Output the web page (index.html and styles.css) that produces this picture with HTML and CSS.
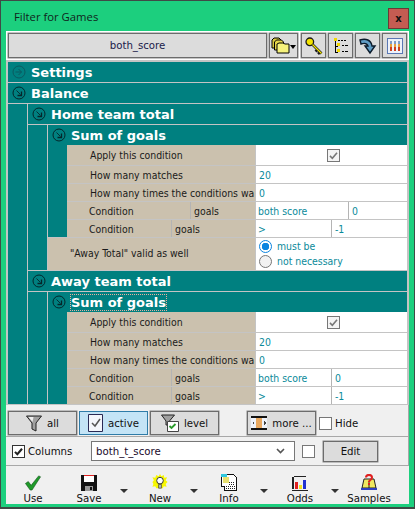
FILE: index.html
```html
<!DOCTYPE html>
<html lang="en">
<head>
  <meta charset="UTF-8" />
  <title>Filter for Games</title>
  <link rel="stylesheet" href="styles.css">
</head>
<body>
  <svg class="defs" width="0" height="0">
    <symbol id="arrow-right" viewBox="0 0 14 14"><circle cx="7" cy="7" r="6" fill="none" stroke="#0b5a60"/><path d="M3.500 7h6M6.500 4l3 3-3 3" fill="none" stroke="#0b5a60"/></symbol>
    <symbol id="arrow-down" viewBox="0 0 14 14"><circle cx="7" cy="7" r="6" fill="none" stroke="#04262a"/><path d="M4.500 4.500l4 4" fill="none" stroke="#04262a" stroke-width=".9"/><path d="M9.500 5.500v4h-4" fill="none" stroke="#04262a" stroke-width="1.300"/></symbol>
    <symbol id="tick" viewBox="0 0 14 14"><path d="M2.500 7.500l3 3 6-7" fill="none" stroke="#777" stroke-width="2"/></symbol>
  </svg>

  <div class="window">
    <div class="titlebar">
      <span class="title">Filter for Games</span>
      <button class="close">x</button>
    </div>

    <div class="panel">
      <div class="topbar">
        <button class="btn name-btn">both_score</button>
        <button class="btn icon-btn wide">
          <svg width="25" height="17" viewBox="0 0 25 17"><path d="M1 3l2-2h5l2 2v8H1z" fill="#d8c840" stroke="#000"/><path d="M3.500 5l2-2h5l2 2v8h-9z" fill="#e8d848" stroke="#000"/><path d="M6 7l2-1h4l2 1h4v9H6z" fill="#f6f27c" stroke="#000"/><path d="M19 8h6l-3 4z" fill="#000"/></svg>
        </button>
        <button class="btn icon-btn">
          <svg width="18" height="18" viewBox="0 0 18 18"><circle cx="4.800" cy="4.800" r="3.800" fill="#f4e400" stroke="#1a1a1a" stroke-width="1.300"/><path d="M7.500 7.500l9 9M12.500 12.500l-2 2M15 15l-2 2" fill="none" stroke="#1a1a1a" stroke-width="2.600"/><path d="M7.500 7.500l9 9" stroke="#f4e400" stroke-width="1.300"/></svg>
        </button>
        <button class="btn icon-btn">
          <svg width="16" height="18" viewBox="0 0 16 18" shape-rendering="crispEdges"><path d="M2.500 3v13M2.500 9H5M2.500 15H5" stroke="#000" fill="none"/><path d="M1 1h3v3H1zM4 6h3v3H4zM4 12h3v3H4z" fill="#f2d800"/><path d="M5 3h2M8 3h2M11 3h2M9 8h2M12 8h3M9 14h2M12 14h3" stroke="#000"/></svg>
        </button>
        <button class="btn icon-btn">
          <svg width="18" height="18" viewBox="0 0 18 18"><path d="M1 3c6-2 11 0 12 6h3l-5 7-5-7h3C8 6 5 6 2 7z" fill="#5f9cc4" stroke="#0b1b2b" stroke-width="1.400"/></svg>
        </button>
        <button class="btn icon-btn">
          <svg width="16" height="16" viewBox="0 0 16 16" shape-rendering="crispEdges"><path d="M.5.500h15v15H.500z" fill="#eef2fa" stroke="#5a78b4"/><path d="M3 3h2v10H3zM7 3h2v10H7zM11 3h2v10h-2z" fill="#e8a040"/><path d="M3 3h2v3H3zM7 3h2v3H7zM11 3h2v3h-2z" fill="#7f9cc8"/><path d="M3 9h2v4H3zM7 9h2v4H7zM11 9h2v4h-2z" fill="#d04020"/></svg>
        </button>
      </div>

      <div class="tree">
        <div class="head"><svg class="arrow"><use href="#arrow-right"/></svg>Settings</div>

        <div class="head"><svg class="arrow"><use href="#arrow-down"/></svg>Balance</div>
        <div class="nest">
          <div class="strip"></div>
          <div class="nest-body">
            <div class="head"><svg class="arrow"><use href="#arrow-down"/></svg>Home team total</div>
            <div class="nest">
              <div class="strip"></div>
              <div class="nest-body">
                <div class="head"><svg class="arrow"><use href="#arrow-down"/></svg>Sum of goals</div>
                <div class="nest flush">
                  <div class="strip last"></div>
                  <div class="rows">
                    <div class="row first">
                      <div class="label">Apply this condition</div>
                      <div class="value center"><span class="check"><svg width="11" height="11"><use href="#tick"/></svg></span></div>
                    </div>
                    <div class="row">
                      <div class="label">How many matches</div>
                      <div class="value">20</div>
                    </div>
                    <div class="row">
                      <div class="label">How many times the conditions wa</div>
                      <div class="value">0</div>
                    </div>
                    <div class="row">
                      <div class="label split s1"><span>Condition</span><span>goals</span></div>
                      <div class="value pair p1"><span>both score</span><span>0</span></div>
                    </div>
                    <div class="row">
                      <div class="label split s2"><span>Condition</span><span>goals</span></div>
                      <div class="value pair p2"><span>&gt;</span><span>-1</span></div>
                    </div>
                  </div>
                </div>
                <div class="row away">
                  <div class="label">"Away Total" valid as well</div>
                  <div class="value radios">
                    <div class="radio-line"><span class="radio on"></span>must be</div>
                    <div class="radio-line"><span class="radio"></span>not necessary</div>
                  </div>
                </div>
              </div>
            </div>

            <div class="head"><svg class="arrow"><use href="#arrow-down"/></svg>Away team total</div>
            <div class="nest">
              <div class="strip"></div>
              <div class="nest-body">
                <div class="head"><svg class="arrow"><use href="#arrow-down"/></svg><span class="focus">Sum of goals</span></div>
                <div class="nest flush">
                  <div class="strip last"></div>
                  <div class="rows">
                    <div class="row first">
                      <div class="label">Apply this condition</div>
                      <div class="value center"><span class="check"><svg width="11" height="11"><use href="#tick"/></svg></span></div>
                    </div>
                    <div class="row">
                      <div class="label">How many matches</div>
                      <div class="value">20</div>
                    </div>
                    <div class="row">
                      <div class="label">How many times the conditions wa</div>
                      <div class="value">0</div>
                    </div>
                    <div class="row">
                      <div class="label split s2"><span>Condition</span><span>goals</span></div>
                      <div class="value pair p2"><span>both score</span><span>0</span></div>
                    </div>
                    <div class="row">
                      <div class="label split s2"><span>Condition</span><span>goals</span></div>
                      <div class="value pair p2"><span>&gt;</span><span>-1</span></div>
                    </div>
                  </div>
                </div>
              </div>
            </div>
          </div>
        </div>
      </div>

      <div class="filters">
        <button class="btn filter">
          <svg width="16" height="17" viewBox="0 0 16 17"><path d="M.5 1h15l-5.500 7v8l-4-2V8z" fill="#a0a0a0" stroke="#222"/><path d="M2.500 2h5l-1 5z" fill="#eee"/></svg>all
        </button>
        <button class="btn filter active">
          <svg width="15" height="18" viewBox="0 0 15 18"><path d="M.5.500h14v17H.500z" fill="#f4f6fb" stroke="#2a2a55"/><path d="M4 9l3 3 5-7" fill="none" stroke="#555" stroke-width="1.500"/></svg>active
        </button>
        <button class="btn filter">
          <svg width="18" height="18" viewBox="0 0 18 18"><path d="M.5 1h13l-5 6v4H5V7z" fill="#a0a0a0" stroke="#222"/><path d="M6.500 7.500h11v10h-11z" fill="#fff" stroke="#444"/><path d="M8.500 12l2 2 4-4" fill="none" stroke="#2a9a2a" stroke-width="1.800"/></svg>level
        </button>
        <button class="btn filter more">
          <svg width="16" height="14" viewBox="0 0 16 14" shape-rendering="crispEdges"><path d="M0 0h16v2H0zM0 12h16v2H0z" fill="#111"/><path d="M0 2h16v10H0z" fill="#eef2fa"/><path d="M5 2h6v10H5z" fill="#e8a860"/><path d="M3 5v4L1 7zM13 5v4l2-2z" fill="#444"/></svg>more ...
        </button>
        <label class="check-line hide"><span class="box"></span>Hide</label>
      </div>

      <div class="columns">
        <label class="check-line cols-check"><span class="box dark"><svg width="11" height="11" viewBox="0 0 14 14"><path d="M2.500 7.500l3 3 6-7" fill="none" stroke="#222" stroke-width="2.600"/></svg></span>Columns</label>
        <div class="select">both_t_score<svg width="9" height="6" viewBox="0 0 9 6"><path d="M1 1l3.500 3.500L8 1" fill="none" stroke="#555" stroke-width="1.600"/></svg></div>
        <span class="box"></span>
        <button class="btn edit">Edit</button>
      </div>

      <div class="actions">
        <div class="action a-use">
          <svg width="18" height="17" viewBox="0 0 18 18"><path d="M1 10l3-2 3 4 8-10 2 1-9 14h-2z" fill="#1f9a2a" stroke="#0a5014" stroke-width=".6"/></svg>
          <span>Use</span>
        </div>
        <div class="action a-save">
          <svg width="16" height="17" viewBox="0 0 16 16" shape-rendering="crispEdges"><path d="M1 0h14l1 1v15H0V1z" fill="#111"/><path d="M3 0h10v1H3z" fill="#e02020"/><path d="M3 1h10v6H3z" fill="#fff"/><path d="M4 11h8v5H4z" fill="#999"/><path d="M9 12h2v3H9z" fill="#111"/></svg>
          <span>Save</span>
        </div>
        <span class="caret"></span>
        <div class="action a-new">
          <svg width="16" height="17" viewBox="0 0 16 18"><path d="M8 0l1.500 2.500L12 1l.5 3 3-.500-1.500 3 2 2-2 2 1 3-3-.500-1 2H4l-1-2-3 .500 1-3-1-2 1.500-2L0 3.500l3 .500L4 1l2.500 1.500z" fill="#f8f800"/><circle cx="8" cy="7" r="3.500" fill="#fff" stroke="#333"/><path d="M6.500 11h3v4h-3z" fill="#bbb" stroke="#333" stroke-width=".7"/></svg>
          <span>New</span>
        </div>
        <span class="caret"></span>
        <div class="action a-info">
          <svg width="16" height="17" viewBox="0 0 16 17" shape-rendering="crispEdges"><path d="M.5 2.500h2v-2h10l3 3v13H3.500v-4h-3z" fill="#fff" stroke="#111"/><path d="M0 0h6v3H0z" fill="#30c8e0"/><path d="M2 3h6v6H2z" fill="#e8e070"/><path d="M8 8h6M8 10h6M5 12h9M5 14h9" stroke="#222" stroke-dasharray="1 1"/></svg>
          <span>Info</span>
        </div>
        <span class="caret"></span>
        <div class="action a-odds">
          <svg width="16" height="17" viewBox="0 0 16 16" shape-rendering="crispEdges"><path d="M0 2h2v12H0zM0 15h16v1H0zM2 1h12v1H2z" fill="#222"/><path d="M3 7h3v7H3z" fill="#e02020"/><path d="M7 10h3v4H7z" fill="#f0e020"/><path d="M11 5h3v9h-3z" fill="#2030d0"/></svg>
          <span>Odds</span>
        </div>
        <span class="caret"></span>
        <div class="action a-samples">
          <svg width="16" height="17" viewBox="0 0 16 17"><path d="M3 5h10l2 9H1z" fill="#f0e860" stroke="#222"/><path d="M0 14h16v2H0z" fill="#3040c0"/><path d="M8 7v7" stroke="#222"/><path d="M5 3.500C5 0 11 0 11 3.500 11 6 8 6 8 8" fill="none" stroke="#e02020" stroke-width="2"/><path d="M7 9h2v2H7z" fill="#e02020"/></svg>
          <span>Samples</span>
        </div>
      </div>
    </div>
  </div>
</body>
</html>
```

FILE: styles.css
```css
* {
  box-sizing: border-box;
}
html, body {
  margin: 0;
  height: 100%;
  overflow: hidden;
}
body {
  font-family: "DejaVu Sans Condensed", "DejaVu Sans", sans-serif;
  font-stretch: condensed;
  font-size: 10.400px;
  color: #111;
}
.defs {
  display: block;
  height: 0;
}
.window {
  width: 415px;
  height: 509px;
  background: #1ccf7e;
  border: 1px solid #3f4a46;
  border-width: 1px 1px 2px 1px;
  padding: 0 5px;
  display: flex;
  flex-direction: column;
}
.titlebar {
  height: 30px;
  flex: none;
  display: flex;
  align-items: center;
  justify-content: space-between;
  padding: 2px 0 0 8px;
}
.title {
  font-family: "Open Sans", sans-serif;
  font-stretch: normal;
  font-size: 11.300px;
  color: #10241c;
  margin-top: -2px;
}
.close {
  width: 21px;
  height: 21px;
  background: #c45c52;
  border: 1px solid #6a3a36;
  font: bold 10px "DejaVu Sans", sans-serif;
  padding: 0;
  color: #111;
  margin-top: 2px;
}
.panel {
  width: 403px;
  height: 473px;
  flex: none;
  background: #f0f0f0;
  display: flex;
  flex-direction: column;
}
.btn {
  background: #dcdcdc;
  border: 1px solid #6c6c6c;
  box-shadow: 0 0 0 .5px #8a8a8a;
  font-family: "DejaVu Sans", sans-serif;
  font-stretch: normal;
  font-size: 10.200px;
  color: #111;
  padding: 0;
  display: flex;
  align-items: center;
  justify-content: center;
}
.topbar {
  height: 29px;
  flex: none;
  background: #fff;
  display: flex;
  align-items: center;
  gap: 2px;
  padding: 0 2px;
}
.name-btn {
  width: 259px;
  height: 25px;
  color: #1a1a4a;
}
.icon-btn {
  width: 25px;
  height: 25px;
}
.icon-btn.wide {
  width: 29px;
  margin-right: 1px;
}
.tree {
  height: 345px;
  flex: none;
  overflow: hidden;
  background: #c4c4c4;
  padding: 2px 2px 0;
  display: flex;
  flex-direction: column;
  gap: 1px;
}
.head {
  height: 20px;
  flex: none;
  background: #008080;
  color: #fff;
  font: bold 13px "DejaVu Sans", sans-serif;
  font-stretch: normal;
  display: flex;
  align-items: center;
  padding-left: 4px;
}
.arrow {
  width: 14px;
  height: 14px;
  margin-right: 5px;
  flex: none;
}
.focus {
  outline: 1px dotted #e8b0a0;
}
.nest {
  display: flex;
  flex: none;
}
.nest.flush {
  margin-top: -1px;
}
.strip {
  width: 20px;
  flex: none;
  background: #008080;
  border-right: 1px solid #c4c4c4;
}
.strip.last {
  width: 19px;
  border-right: 0;
}
.nest-body {
  flex: 1;
  min-width: 0;
  display: flex;
  flex-direction: column;
  gap: 1px;
}
.rows {
  flex: 1;
  min-width: 0;
  display: flex;
  flex-direction: column;
  gap: 1px;
}
.row {
  display: flex;
  height: 17px;
  flex: none;
  gap: 1px;
}
.row.first {
  height: 20px;
}
.label {
  width: 188px;
  flex: none;
  background: #cbc1ae;
  padding-left: 23px;
  line-height: 19px;
  white-space: nowrap;
  overflow: hidden;
  color: #1a1a1a;
}
.row.first .label {
  line-height: 21px;
}
.label.split {
  display: flex;
  padding-left: 0;
  gap: 1px;
  background: #b4b4b4;
}
.label.split span {
  background: #cbc1ae;
  display: block;
}
.split span:first-child {
  padding-left: 22px;
}
.split span:last-child {
  padding-left: 3px;
  flex: 1;
}
.s1 span:first-child {
  width: 123px;
}
.s2 span:first-child {
  width: 104px;
}
.value {
  flex: 1;
  min-width: 0;
  background: #fff;
  color: #0a8a9a;
  padding-left: 3px;
  line-height: 19px;
  overflow: hidden;
}
.value.center {
  display: flex;
  align-items: center;
  justify-content: center;
}
.check {
  width: 13px;
  height: 13px;
  border: 1px solid #777;
  background: #f4f4f4;
  display: block;
}
.check svg {
  display: block;
}
.value.pair {
  display: flex;
  padding: 0;
  gap: 1px;
  background: #b4b4b4;
}
.pair span {
  background: #fff;
  padding-left: 2px;
  display: block;
}
.pair span:last-child {
  flex: 1;
  padding-left: 3px;
}
.p1 span:first-child {
  width: 92px;
}
.p2 span:first-child {
  width: 75px;
}
.row.away {
  height: 32px;
}
.away .label {
  width: 207px;
  line-height: 30px;
  padding-left: 22px;
}
.radios {
  padding: 1px 0 0 3px;
  line-height: 15px;
}
.radio-line {
  display: flex;
  align-items: center;
  height: 15px;
}
.radio {
  width: 13px;
  height: 13px;
  border-radius: 50%;
  border: 1px solid #777;
  background: #f2f2f2;
  margin-right: 5px;
  flex: none;
}
.radio.on {
  border-color: #0a84e0;
  background: radial-gradient(circle, #0a84e0 0 3.500px, #fff 4px);
}
.filters {
  height: 32px;
  flex: none;
  display: flex;
  align-items: center;
  padding: 5px 0 0 2px;
  border-bottom: 1px solid #a8a8a8;
  border-right: 1px solid #a8a8a8;
}
.filter {
  width: 69px;
  height: 24px;
  margin-right: 2px;
  gap: 5px;
}
.filter.active {
  background: #c4e4f6;
  border-color: #2f7ca8;
  box-shadow: none;
}
.filter.more {
  margin-left: 26px;
  margin-right: 3px;
}
.check-line {
  display: flex;
  align-items: center;
  font-family: "DejaVu Sans", sans-serif;
  font-stretch: normal;
  font-size: 10.200px;
  gap: 3px;
}
.box {
  width: 13px;
  height: 13px;
  border: 1px solid #777;
  background: #fff;
  display: block;
  flex: none;
}
.box.dark {
  border-color: #333;
}
.box svg {
  display: block;
}
.columns {
  height: 29px;
  flex: none;
  display: flex;
  align-items: center;
  padding: 0 0 0 6px;
  border-bottom: 1px solid #a8a8a8;
  border-right: 1px solid #a8a8a8;
}
.cols-check {
  width: 79px;
  flex: none;
}
.select {
  width: 204px;
  height: 20px;
  margin-right: 7px;
  background: #fff;
  border: 1px solid #777;
  display: flex;
  align-items: center;
  justify-content: space-between;
  padding: 0 9px 0 4px;
  font-family: "DejaVu Sans", sans-serif;
  font-stretch: normal;
  font-size: 10.200px;
  color: #1a0a2a;
}
.edit {
  width: 55px;
  height: 21px;
  margin-left: 8px;
}
.actions {
  flex: 1;
  min-height: 0;
  overflow: hidden;
  display: flex;
  padding-top: 8px;
}
.action {
  display: flex;
  flex-direction: column;
  align-items: center;
  height: 36px;
  font-family: "DejaVu Sans", sans-serif;
  font-stretch: normal;
  font-size: 10.200px;
  line-height: 13px;
  gap: 1px;
  flex: none;
}
.action svg {
  flex: none;
}
.caret {
  width: 0;
  height: 0;
  flex: none;
  border: 4px solid transparent;
  border-top: 4px solid #333;
  border-bottom: 0;
  margin-top: 15px;
}
.a-use {
  width: 54px;
}
.a-save {
  width: 58px;
  margin-right: 2px;
}
.a-new {
  width: 60px;
  margin-left: 2px;
}
.a-info {
  width: 62px;
}
.a-odds {
  width: 62px;
  margin-left: 1px;
}
.a-samples {
  width: 60px;
}
```
